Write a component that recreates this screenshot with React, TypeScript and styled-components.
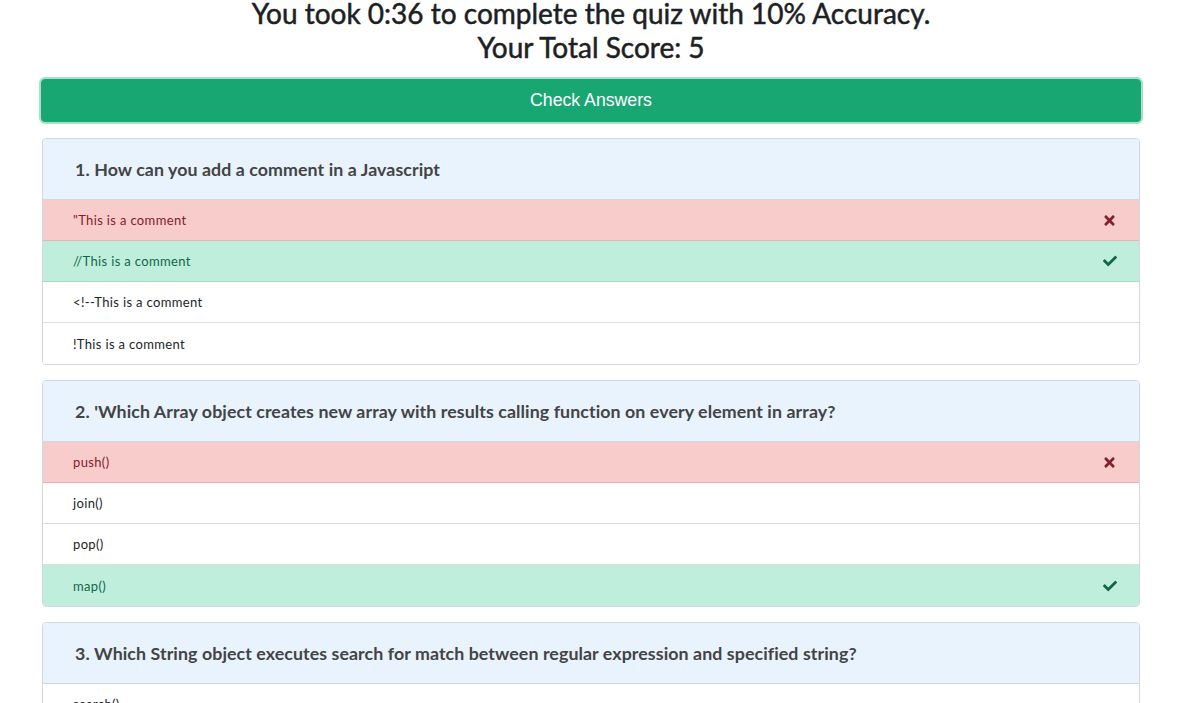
import { createGlobalStyle } from 'styled-components';
import styled from 'styled-components';
import { FaCheck, FaTimes } from 'react-icons/fa';

type OptionState = 'wrong' | 'right' | 'none';

interface QuestionType {
  id: number;
  title: string;
  options: { text: string; state: OptionState }[];
}

const questions: QuestionType[] = [
  {
    id: 1,
    title: 'How can you add a comment in a Javascript',
    options: [
      { text: '"This is a comment', state: 'wrong' },
      { text: '//This is a comment', state: 'right' },
      { text: '<!--This is a comment', state: 'none' },
      { text: '!This is a comment', state: 'none' },
    ],
  },
  {
    id: 2,
    title: "'Which Array object creates new array with results calling function on every element in array?",
    options: [
      { text: 'push()', state: 'wrong' },
      { text: 'join()', state: 'none' },
      { text: 'pop()', state: 'none' },
      { text: 'map()', state: 'right' },
    ],
  },
  {
    id: 3,
    title: 'Which String object executes search for match between regular expression and specified string?',
    options: [
      { text: 'search()', state: 'none' },
      { text: 'match()', state: 'none' },
      { text: 'replace()', state: 'none' },
      { text: 'concat()', state: 'none' },
    ],
  },
];

const GlobalStyle = createGlobalStyle`
  * {
    box-sizing: border-box;
  }
  body {
    margin: 0;
    background: #fff;
    font-family: Lato, 'Open Sans', sans-serif;
    overflow: hidden;
  }
`;

const App = () => {
  return (
    <>
      <GlobalStyle />
      <Page>
        <Result>
          <div>You took 0:36 to complete the quiz with 10% Accuracy.</div>
          <div>Your Total Score: 5</div>
        </Result>
        <CheckButton>Check Answers</CheckButton>
        {questions.map((q) => (
          <Card key={q.id}>
            <CardHeader>
              {q.id}. {q.title}
            </CardHeader>
            {q.options.map((opt) => (
              <Option key={opt.text} state={opt.state}>
                <span>{opt.text}</span>
                {opt.state === 'wrong' && <FaTimes size={15} />}
                {opt.state === 'right' && <FaCheck size={14} />}
              </Option>
            ))}
          </Card>
        ))}
      </Page>
    </>
  );
};

const Page = styled.div`
  width: 1098px;
  margin-left: 42px;
  margin-top: -4px;
`;

const Result = styled.h2`
  margin: 0 0 15px;
  text-align: center;
  font-family: Lato, sans-serif;
  font-weight: 400;
  font-size: 28px;
  line-height: 34px;
  color: #1c1f23;
  -webkit-text-stroke: 0.5px #1c1f23;
`;

const CheckButton = styled.button`
  display: block;
  width: 1100px;
  height: 43px;
  margin: 0 -1px 16px;
  border: 1px solid #18a673;
  border-radius: 4px;
  background: #18a673;
  color: #fff;
  font-family: 'Liberation Sans', Arial, sans-serif;
  font-size: 17.7px;
  box-shadow: 0 0 0 2px #a4e2cb;
  cursor: pointer;
`;

const Card = styled.div`
  margin-bottom: 15px;
  border-radius: 4px;
  overflow: hidden;
  border: 1px solid #cfd8e3;
`;

const CardHeader = styled.div`
  height: 61px;
  display: flex;
  align-items: center;
  padding: 0 32px;
  background: #e8f3fe;
  border-bottom: 1px solid #cfd8e3;
  font-family: Lato, sans-serif;
  font-weight: 700;
  font-size: 17.8px;
  letter-spacing: 0.08px;
  color: #444;
`;

const optionColors = {
  wrong: { bg: '#f8cccb', fg: '#842029', border: '#e9b2b2' },
  right: { bg: '#bfeedd', fg: '#0f6848', border: '#a6dcc6' },
  none: { bg: '#fff', fg: '#212529', border: '#dedede' },
};

const Option = styled.div<{ state: OptionState }>`
  height: 41px;
  display: flex;
  align-items: center;
  justify-content: space-between;
  padding: 0 22px 0 30px;
  background: ${({ state }) => optionColors[state].bg};
  color: ${({ state }) => optionColors[state].fg};
  border-bottom: 1px solid ${({ state }) => optionColors[state].border};
  font-family: Lato, sans-serif;
  font-size: 13px;
  letter-spacing: 0.35px;
  &:last-child {
    border-bottom: none;
  }
`;

export default App;
